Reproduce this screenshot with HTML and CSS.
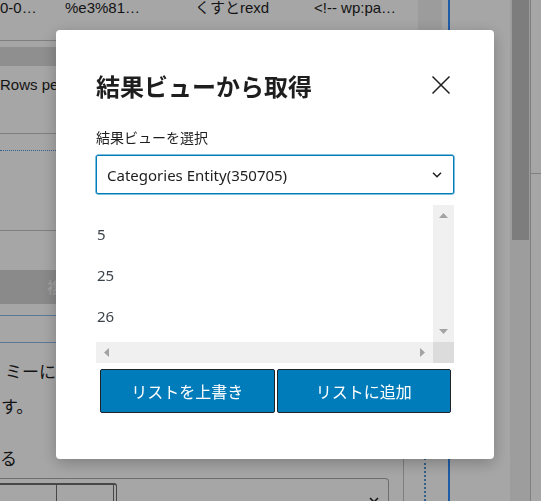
FILE: index.html
```html
<!DOCTYPE html>
<html lang="ja">
<head>
<meta charset="utf-8">
<title>結果ビューから取得</title>
<link rel="stylesheet" href="styles.css">
</head>
<body>
<div class="page">
  <div class="main">
    <div class="thead">
      <span class="c1">0-0…</span>
      <span class="c2">%e3%81…</span>
      <span class="c3">くすとrexd</span>
      <span class="c4">&lt;!-- wp:pa…</span>
    </div>
    <div class="band-top"></div>
    <div class="rows-per">Rows per page</div>
    <div class="dotted"></div>
    <div class="sect"></div>
    <div class="band2">複製</div>
    <div class="blue-box"></div>
    <p class="txt l1">ミーに置き換えます</p>
    <p class="txt l2">す。</p>
    <div class="form-area">
      <p class="txt l3">る</p>
      <div class="bigselect">
        <div class="inner"><span></span><span></span></div>
        <svg class="chev" width="10" height="6" viewBox="0 0 10 6"><path d="M1 1 L5 5 L9 1" fill="none" stroke="#1e1e1e" stroke-width="1.5"/></svg>
      </div>
    </div>
  </div>
  <div class="gutter">
    <div class="g-top"></div>
    <div class="g-fill"></div>
    <div class="g-dots"></div>
  </div>
  <div class="rule-blue"></div>
  <div class="side"></div>
  <div class="vtrack"><div class="vthumb"></div></div>
  <div class="edge"><div class="edge-top"></div></div>
</div>

<div class="scrim">
  <div class="modal" role="dialog" aria-labelledby="modal-title">
    <div class="modal-head">
      <h1 id="modal-title" class="modal-title">結果ビューから取得</h1>
      <button class="close" aria-label="閉じる">
        <svg width="20" height="20" viewBox="0 0 20 20"><path d="M1.5 1.5 L18.5 18.5 M18.5 1.5 L1.5 18.5" fill="none" stroke="#1e1e1e" stroke-width="1.5"/></svg>
      </button>
    </div>
    <div class="field-label">結果ビューを選択</div>
    <div class="select" role="combobox">
      <span class="select-value">Categories Entity(350705)</span>
      <svg width="10" height="6" viewBox="0 0 10 6"><path d="M1 0.8 L5 4.8 L9 0.8" fill="none" stroke="#1e1e1e" stroke-width="1.5"/></svg>
    </div>
    <div class="listbox">
      <ul class="list">
        <li>5</li>
        <li>25</li>
        <li>26</li>
      </ul>
      <div class="vbar">
        <span class="arrow"><svg width="9" height="5" viewBox="0 0 9 5"><polygon points="0,5 4.5,0 9,5" fill="#a3a3a3"/></svg></span>
        <span class="arrow"><svg width="9" height="5" viewBox="0 0 9 5"><polygon points="0,0 4.5,5 9,0" fill="#a3a3a3"/></svg></span>
      </div>
      <div class="hbar">
        <span class="arrow"><svg width="5" height="9" viewBox="0 0 5 9"><polygon points="5,0 0,4.5 5,9" fill="#a3a3a3"/></svg></span>
        <span class="arrow"><svg width="5" height="9" viewBox="0 0 5 9"><polygon points="0,0 5,4.5 0,9" fill="#a3a3a3"/></svg></span>
      </div>
      <div class="corner"></div>
    </div>
    <div class="actions">
      <button class="btn">リストを上書き</button>
      <button class="btn">リストに追加</button>
    </div>
  </div>
</div>
</body>
</html>
```
FILE: styles.css
```css
* { box-sizing: border-box; }
html, body { margin: 0; padding: 0; }
body {
  width: 541px;
  height: 501px;
  overflow: hidden;
  background: #fff;
  color: #1e1e1e;
  font-family: "Noto Sans", "Noto Sans CJK JP", sans-serif;
}

/* ---------- background admin page ---------- */
.page { display: flex; height: 501px; }
.main {
  width: 418px;
  flex: none;
  display: flex;
  flex-direction: column;
  overflow: hidden;
}
.thead {
  height: 41px;
  flex: none;
  border-bottom: 1px solid #c3c4c7;
  display: flex;
  font-family: "Liberation Sans", "Noto Sans CJK JP", sans-serif;
  font-size: 15px;
  line-height: 16px;
  white-space: nowrap;
}
.c1 { width: 65px; }
.c2 { width: 130px; }
.c3 { width: 119px; }
.c4 { width: 104px; }
.band-top { flex: none; margin-top: 6px; height: 19px; background: #dcdcde; }
.rows-per {
  flex: none;
  height: 68px;
  padding-top: 9px;
  border-bottom: 1px solid #c3c4c7;
  font-family: "Liberation Sans", sans-serif;
  font-size: 15px;
  line-height: 20px;
  white-space: nowrap;
}
.dotted { flex: none; margin-top: 16px; border-top: 1px dotted #4f94d4; }
.sect { flex: none; height: 80px; border-bottom: 1px solid #c3c4c7; }
.band2 {
  flex: none;
  margin-top: 39px;
  height: 34px;
  background: #d4d4d4;
  color: #fafafa;
  padding-left: 47px;
  font-family: "Noto Sans CJK JP", sans-serif;
  font-size: 15px;
  line-height: 34px;
  white-space: nowrap;
}
.blue-box {
  flex: none;
  margin-top: 11px;
  height: 28px;
  border-top: 1px solid #8cb9e6;
  border-bottom: 1px solid #8cb9e6;
}
.txt {
  flex: none;
  margin: 0;
  font-family: "Noto Sans CJK JP", sans-serif;
  font-size: 17px;
  line-height: 35px;
  white-space: nowrap;
  color: #1e1e1e;
}
.l1 { margin-top: 10px; padding-left: 5px; }
.l2 { padding-left: 1px; }
.form-area {
  flex: none;
  margin-top: 20px;
  width: 404px;
  height: 80px;
  padding-top: 5px;
  border-right: 1px solid #c3c4c7;
}
.l3 { line-height: 20px; }
.bigselect {
  margin-top: 10px;
  width: 389px;
  height: 40px;
  padding-top: 4px;
  display: flex;
  justify-content: space-between;
  align-items: flex-start;
  border-top: 1px solid #a7aaad;
  border-right: 1px solid #a7aaad;
  border-radius: 0 4px 0 0;
}
.inner {
  display: flex;
  width: 117px;
  height: 30px;
  border-top: 2px solid #6d6d6d;
  border-right: 1px solid #6d6d6d;
  border-radius: 0 3px 0 0;
}
.inner span { width: 57px; border-right: 1px solid #6d6d6d; }
.chev { margin: 14px 9px 0 0; }

.gutter { width: 30px; flex: none; display: flex; flex-direction: column; }
.g-top { width: 24px; height: 40px; background: #f0f0f1; }
.g-fill { flex: 1; }
.g-dots { height: 43px; margin-left: 6px; border-left: 2px dotted #4f94d4; }
.rule-blue { width: 2px; flex: none; background: #2f8cff; }
.side { width: 60px; flex: none; }
.vtrack { width: 20px; flex: none; background: #f1f1f1; padding: 0 1px 0 2px; }
.vthumb { height: 240px; background: #c1c1c1; }
.edge { width: 11px; flex: none; border-left: 1px solid #c3c4c7; }
.edge-top { height: 174px; border-bottom: 1px solid #c3c4c7; }

/* ---------- modal ---------- */
.scrim {
  position: fixed;
  inset: 0;
  background: rgba(0, 0, 0, 0.35);
  display: flex;
  align-items: flex-start;
  padding: 30px 0 0 56px;
}
.modal {
  width: 438px;
  height: 429px;
  background: #fff;
  border-radius: 4px;
  box-shadow: 0 4px 16px rgba(0, 0, 0, 0.25);
  padding: 40px 40px 0 40px;
  display: flex;
  flex-direction: column;
}
.modal-head {
  display: flex;
  justify-content: space-between;
  align-items: center;
  height: 32px;
}
.modal-title {
  margin: 0;
  font-family: "Noto Sans CJK JP", sans-serif;
  font-size: 24px;
  font-weight: 700;
  line-height: 32px;
  color: #1e1e1e;
  white-space: nowrap;
}
.close {
  width: 26px;
  height: 26px;
  margin-top: -2px;
  padding: 0;
  border: 0;
  background: none;
  display: flex;
  align-items: center;
  justify-content: center;
}
.field-label {
  margin-top: 25px;
  font-family: "Noto Sans CJK JP", sans-serif;
  font-size: 14px;
  line-height: 20px;
  color: #1e1e1e;
}
.select {
  margin-top: 8px;
  height: 39px;
  flex: none;
  border: 1px solid #007cba;
  box-shadow: 0 0 0 0.5px #007cba;
  border-radius: 2px;
  padding: 0 11px 0 10px;
  display: flex;
  align-items: center;
  justify-content: space-between;
  font-size: 15px;
  color: #1e1e1e;
}
.listbox {
  margin-top: 11px;
  height: 158px;
  flex: none;
  display: grid;
  grid-template-columns: 1fr 21px;
  grid-template-rows: 1fr 21px;
}
.list {
  margin: 0;
  padding: 9px 0 0 1px;
  list-style: none;
  overflow: hidden;
  font-size: 15px;
  line-height: 41px;
  color: #3c434a;
}
.vbar {
  background: #f0f0f0;
  display: flex;
  flex-direction: column;
  justify-content: space-between;
}
.hbar {
  background: #f0f0f0;
  display: flex;
  justify-content: space-between;
}
.arrow {
  width: 21px;
  height: 21px;
  display: flex;
  align-items: center;
  justify-content: center;
}
.arrow svg { display: block; }
.corner { background: #dcdcdc; }
.actions {
  margin: 6px 3px 0 4px;
  display: flex;
  gap: 2px;
}
.btn {
  flex: 1;
  height: 44px;
  background: #007cba;
  color: #fff;
  border: 1.5px solid #1d2327;
  border-radius: 2px;
  font-family: "Noto Sans CJK JP", sans-serif;
  font-size: 16px;
  line-height: 20px;
  padding: 0;
}
```
